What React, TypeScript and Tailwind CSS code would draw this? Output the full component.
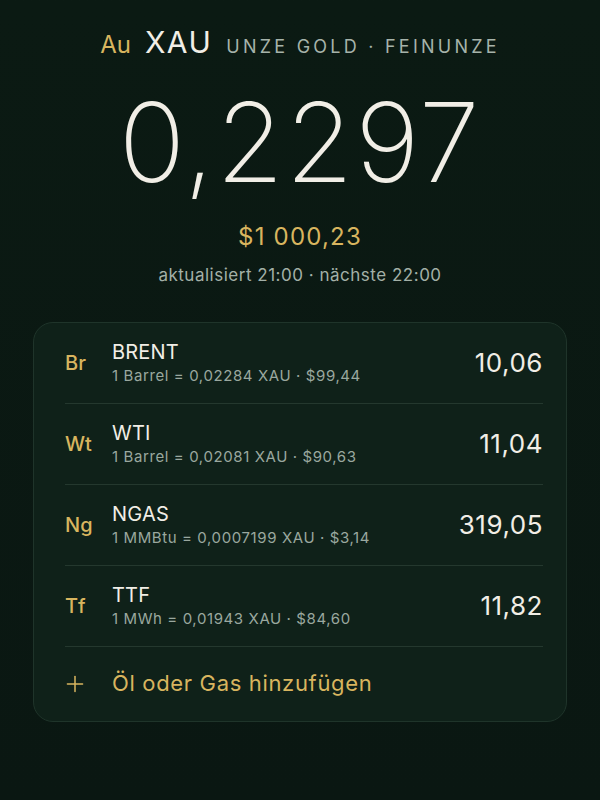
import { Plus } from 'lucide-react';

type Row = { sym: string; name: string; sub: string; value: string };

const rows: Row[] = [
  { sym: 'Br', name: 'BRENT', sub: '1 Barrel = 0,02284 XAU · $99,44', value: '10,06' },
  { sym: 'Wt', name: 'WTI', sub: '1 Barrel = 0,02081 XAU · $90,63', value: '11,04' },
  { sym: 'Ng', name: 'NGAS', sub: '1 MMBtu = 0,0007199 XAU · $3,14', value: '319,05' },
  { sym: 'Tf', name: 'TTF', sub: '1 MWh = 0,01943 XAU · $84,60', value: '11,82' },
];

export default function App() {
  return (
    <div className="min-h-[800px] w-[600px] bg-gradient-to-b from-[#0b1a13] to-[#0a1712] font-['Inter',sans-serif] text-[#f1eee6]">
      <header className="flex items-baseline justify-center gap-3.5 pt-[20px]">
        <span className="text-[24px] text-[#d8b55f]">Au</span>
        <span className="text-[30px] tracking-[0.05em] text-[#f1eee6]">XAU</span>
        <span className="text-[18px] tracking-[0.18em] text-[#a6b3aa]">UNZE GOLD · FEINUNZE</span>
      </header>

      <div className="mt-[12px] text-center text-[110px] leading-[130px] font-extralight tracking-[0.015em]">0,2297</div>

      <div className="mt-[12px] text-center text-[24px] tracking-[0.05em] text-[#d8b55f]">$1 000,23</div>
      <div className="mt-[8px] text-center text-[17px] tracking-[0.03em] text-[#a3b0a7]">aktualisiert 21:00 · nächste 22:00</div>

      <section className="mx-[33px] mt-[33px] rounded-[20px] border border-[#1f342a] bg-[#0f2119] pl-[31px] pr-[23px]">
        {rows.map((r) => (
          <div key={r.sym} className="flex h-[81px] items-center border-b border-[#24382e]">
            <span className="w-[20px] text-center text-[20px] font-medium text-[#d8b55f]">{r.sym}</span>
            <div className="ml-[27px] flex-1">
              <div className="text-[20px] leading-[24px] tracking-[0.01em] text-[#f1eee6]">{r.name}</div>
              <div className="mt-[3px] text-[15px] leading-[18px] tracking-[0.04em] text-[#9aa89f]">{r.sub}</div>
            </div>
            <span className="text-[26px] tracking-[0.02em] text-[#f1eee6]">{r.value}</span>
          </div>
        ))}
        <div className="flex h-[74px] items-center">
          <Plus className="h-[26px] w-[26px] -ml-[3px] text-[#d8b55f]" strokeWidth={1.4} />
          <span className="ml-[24px] text-[22px] tracking-[0.03em] text-[#d8b55f]">Öl oder Gas hinzufügen</span>
        </div>
      </section>
    </div>
  );
}
